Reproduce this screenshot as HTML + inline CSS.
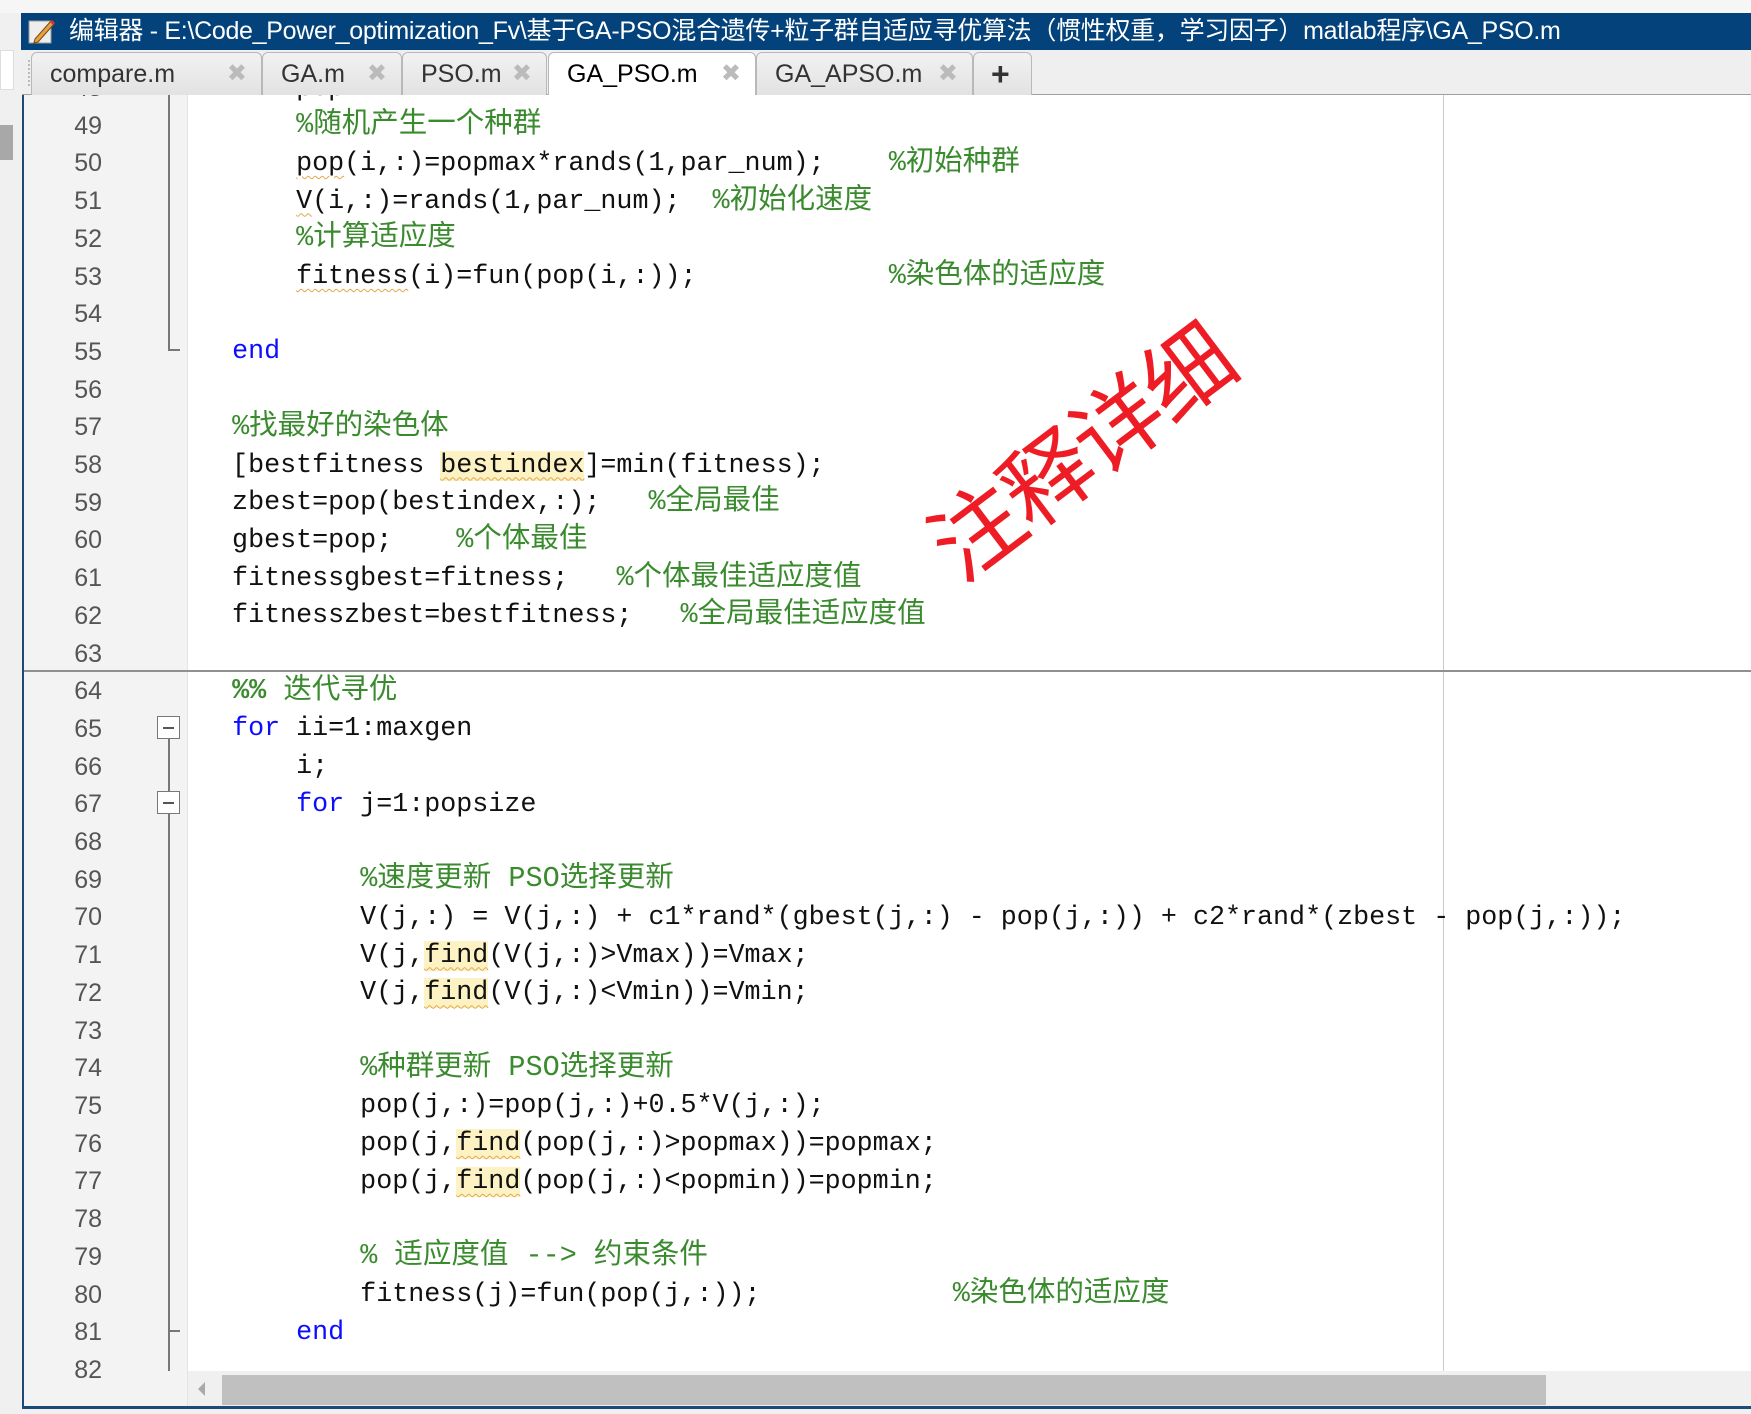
<!DOCTYPE html>
<html><head><meta charset="utf-8"><style>
*{margin:0;padding:0;box-sizing:border-box}
body{width:1751px;height:1414px;overflow:hidden;background:#f0f0f0;position:relative;font-family:"Liberation Sans","Noto Sans CJK SC",sans-serif}
.title{position:absolute;left:21px;top:13px;width:1730px;height:37px;background:#03427a;color:#fff;font-size:25px;line-height:37px;white-space:nowrap;overflow:hidden}
.title span{position:absolute;left:48px;top:0;letter-spacing:-0.3px}
.tabbar{position:absolute;left:22px;top:50px;width:1729px;height:45px;background:#efefef;border-bottom:1px solid #a0a0a0}
.tab{position:absolute;top:2px;height:43px;border:1px solid #b8b8b8;border-bottom:none;border-radius:6px 6px 0 0;background:linear-gradient(#f2f2f2,#e2e2e2);font-size:25px;color:#333;line-height:42px;padding-left:18px}
.tab.act{background:#fff;color:#000;height:44px}
.tab .x{position:absolute;right:14px;top:0;color:#bbb;font-size:24px}
.ed{position:absolute;left:22px;top:95px;width:1729px;height:1312px;background:#fff;overflow:hidden;border-left:2px solid #1e4a7a}
.gut{position:absolute;left:0;top:0;width:164px;height:100%;background:#f3f3f3;border-right:1px solid #e4e4e4}
.ln{position:absolute;left:0;top:-25px;width:78px;text-align:right;font-family:"Liberation Sans",sans-serif;font-size:25px;color:#555;line-height:37.7px;white-space:pre}
.code{position:absolute;left:144px;top:-24.5px;font-family:"Liberation Mono","Noto Sans CJK SC",monospace;font-size:26.7px;white-space:pre;color:#111;line-height:37.7px}
.c{color:#3a8a2e;font-size:28.5px;line-height:10px}
.k{color:#0e0eff}
.hl{background:#fdf2c4;text-decoration:underline wavy #e2a84a;text-decoration-thickness:1px;text-underline-offset:5px}
.w{text-decoration:underline wavy #e2a84a;text-decoration-thickness:1px;text-underline-offset:5px}
.fold{position:absolute;left:133px;width:23px;height:23px;border:1.5px solid #777;background:#fff}
.fold:after{content:"";position:absolute;left:5px;right:5px;top:10px;height:1.5px;background:#555}
.vl{position:absolute;left:144px;width:1.5px;background:#777}
.wm{position:absolute;left:1078px;top:447px;transform:translate(-50%,-50%) rotate(-37deg);color:#ee1c25;font-family:"Noto Sans CJK SC",sans-serif;font-size:90px;white-space:nowrap;letter-spacing:-2px}
</style></head><body>
<div style="position:absolute;left:0;top:0;width:1751px;height:13px;background:#f6f6f6"></div>
<div style="position:absolute;left:0;top:125px;width:13px;height:35px;background:#a8a8a8"></div>
<div style="position:absolute;left:0;top:50px;width:14px;height:40px;border:1px solid #ddd;background:#fff"></div>
<div class="title">
<svg style="position:absolute;left:6px;top:4px" width="30" height="30" viewBox="0 0 30 30"><rect x="2" y="4" width="22" height="22" fill="#eee" stroke="#999"/><path d="M8 22 L24 4 L27 7 L11 25 L7 26Z" fill="#e8a040" stroke="#7a4a10"/><path d="M24 4l3 3" stroke="#d33" stroke-width="3"/></svg>
<span>编辑器 - E:\Code_Power_optimization_Fv\基于GA-PSO混合遗传+粒子群自适应寻优算法（惯性权重，学习因子）matlab程序\GA_PSO.m</span></div>
<div class="tabbar">
<div style="position:absolute;left:6px;top:10px;width:3px;height:26px;border-left:2px dotted #bbb"></div>
<div class="tab" style="left:9px;width:231px">compare.m<span class="x">✖</span></div>
<div class="tab" style="left:240px;width:140px">GA.m<span class="x">✖</span></div>
<div class="tab" style="left:380px;width:145px">PSO.m<span class="x">✖</span></div>
<div class="tab act" style="left:526px;width:208px">GA_PSO.m<span class="x">✖</span></div>
<div class="tab" style="left:734px;width:217px">GA_APSO.m<span class="x">✖</span></div>
<div class="tab" style="left:951px;width:59px;font-size:32px;font-weight:bold;color:#333;padding-left:17px">+</div>
</div>
<div class="ed">
<div class="gut"></div>
<div style="position:absolute;left:1419px;top:0;width:1px;height:1276px;background:#ccc"></div>
<div style="position:absolute;left:0;top:575px;width:1729px;height:2px;background:#909090"></div>
<div class="vl" style="top:0;height:255px"></div>
<div style="position:absolute;left:144px;top:254px;width:12px;height:1.5px;background:#777"></div>
<div style="position:absolute;left:133px;top:-4px;width:23px;height:2px;background:#777"></div>
<div class="vl" style="top:630px;height:646px"></div>
<div style="position:absolute;left:144px;top:1235px;width:12px;height:1.5px;background:#777"></div>
<div class="fold" style="top:621px"></div>
<div class="fold" style="top:696px"></div>
<div class="ln">48
49
50
51
52
53
54
55
56
57
58
59
60
61
62
63
64
65
66
67
68
69
70
71
72
73
74
75
76
77
78
79
80
81
82</div>
<div class="code">        pop
        <span class="c">%随机产生一个种群</span>
        <span class="w">pop</span>(i,:)=popmax*rands(1,par_num);    <span class="c">%初始种群</span>
        <span class="w">V</span>(i,:)=rands(1,par_num);  <span class="c">%初始化速度</span>
        <span class="c">%计算适应度</span>
        <span class="w">fitness</span>(i)=fun(pop(i,:));            <span class="c">%染色体的适应度</span>

    <span class="k">end</span>

    <span class="c">%找最好的染色体</span>
    [bestfitness <span class="hl">bestindex</span>]=min(fitness);
    zbest=pop(bestindex,:);   <span class="c">%全局最佳</span>
    gbest=pop;    <span class="c">%个体最佳</span>
    fitnessgbest=fitness;   <span class="c">%个体最佳适应度值</span>
    fitnesszbest=bestfitness;   <span class="c">%全局最佳适应度值</span>

    <span class="c" style="font-weight:bold">%% </span><span class="c">迭代寻优</span>
    <span class="k">for</span> ii=1:maxgen
        i;
        <span class="k">for</span> j=1:popsize

            <span class="c">%速度更新 PSO选择更新</span>
            V(j,:) = V(j,:) + c1*rand*(gbest(j,:) - pop(j,:)) + c2*rand*(zbest - pop(j,:));
            V(j,<span class="hl">find</span>(V(j,:)&gt;Vmax))=Vmax;
            V(j,<span class="hl">find</span>(V(j,:)&lt;Vmin))=Vmin;

            <span class="c">%种群更新 PSO选择更新</span>
            pop(j,:)=pop(j,:)+0.5*V(j,:);
            pop(j,<span class="hl">find</span>(pop(j,:)&gt;popmax))=popmax;
            pop(j,<span class="hl">find</span>(pop(j,:)&lt;popmin))=popmin;

            <span class="c">% 适应度值 --&gt; 约束条件</span>
            fitness(j)=fun(pop(j,:));            <span class="c">%染色体的适应度</span>
        <span class="k">end</span>
</div>
<div style="position:absolute;left:164px;top:1276px;width:1565px;height:36px;background:#f0f0f0"></div>
<div style="position:absolute;left:174px;top:1287px;width:0;height:0;border-top:7px solid transparent;border-bottom:7px solid transparent;border-right:7px solid #aaa"></div>
<div style="position:absolute;left:198px;top:1280px;width:1324px;height:30px;background:#c0c0c0"></div>
</div>
<div style="position:absolute;left:22px;top:1406px;width:1729px;height:3px;background:#1e4a7a"></div>
<div class="wm">注释详细</div>
</body></html>
